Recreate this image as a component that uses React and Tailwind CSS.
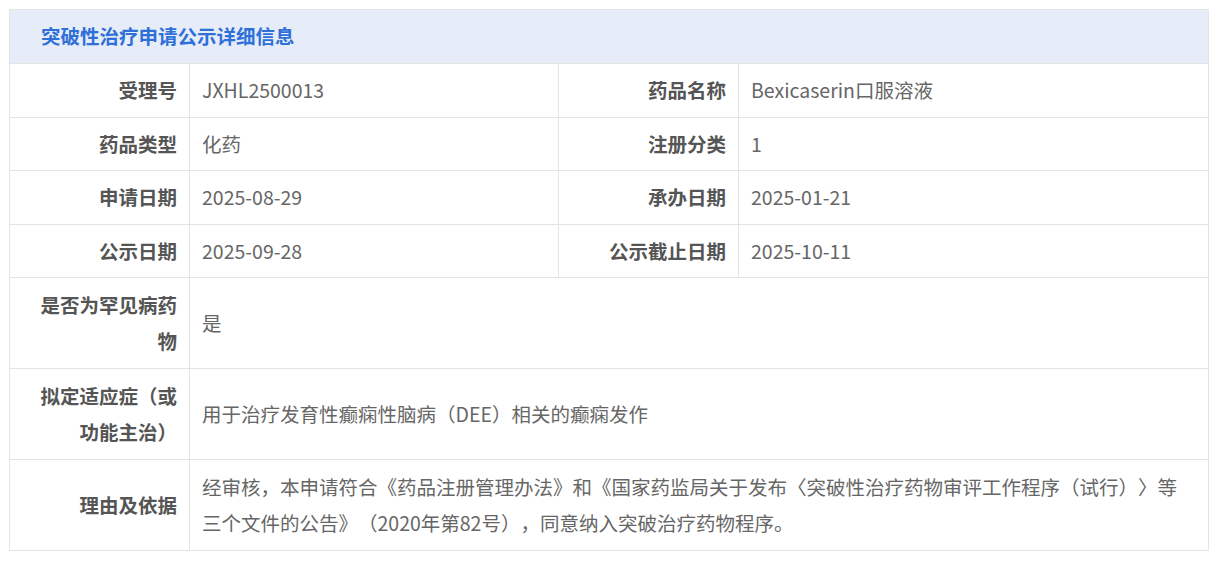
const rows = [
  [['受理号', 'JXHL2500013'], ['药品名称', 'Bexicaserin口服溶液']],
  [['药品类型', '化药'], ['注册分类', '1']],
  [['申请日期', '2025-08-29'], ['承办日期', '2025-01-21']],
  [['公示日期', '2025-09-28'], ['公示截止日期', '2025-10-11']],
];

const wide = [
  ['是否为罕见病药物', '是'],
  ['拟定适应症（或功能主治）', '用于治疗发育性癫痫性脑病（DEE）相关的癫痫发作'],
  ['理由及依据', '经审核，本申请符合《药品注册管理办法》和《国家药监局关于发布〈突破性治疗药物审评工作程序（试行）〉等三个文件的公告》（2020年第82号），同意纳入突破治疗药物程序。'],
];

const label = 'flex items-center justify-end text-right px-3 border-r border-b border-[#e4e4e4] font-bold text-[#555]';
const value = 'flex items-center pl-3 pr-4 border-r border-b border-[#e4e4e4] text-[#666]';

export default function App() {
  return (
    <div className="min-h-screen bg-white pl-[9px] pt-[9px] [text-spacing-trim:space-all]" style={{ fontFamily: '"Noto Sans CJK SC", "Noto Sans", sans-serif' }}>
      <div className="w-[1200px] border-l border-t border-[#e4e4e4] text-[19.5px] leading-[36.5px]">
        <div className="h-[54px] flex items-center pl-[31px] bg-[#e6edf9] border-r border-b border-[#e4e4e4] font-bold text-[#2f6fd8]">
          突破性治疗申请公示详细信息
        </div>
        <div className="grid grid-cols-[180px_369px_180px_1fr]">
          {rows.map((r, i) => (
            <div key={i} className="contents">
              {r.map(([k, v]) => (
                <div key={k} className="contents">
                  <div className={`${label} py-2`}>{k}</div>
                  <div className={`${value} py-2`}>{v}</div>
                </div>
              ))}
            </div>
          ))}
          {wide.map(([k, v]) => (
            <div key={k} className="contents">
              <div className={`${label} py-[8.5px]`}>{k}</div>
              <div className={`${value} py-[8.5px] col-span-3`}>{v}</div>
            </div>
          ))}
        </div>
      </div>
    </div>
  );
}
